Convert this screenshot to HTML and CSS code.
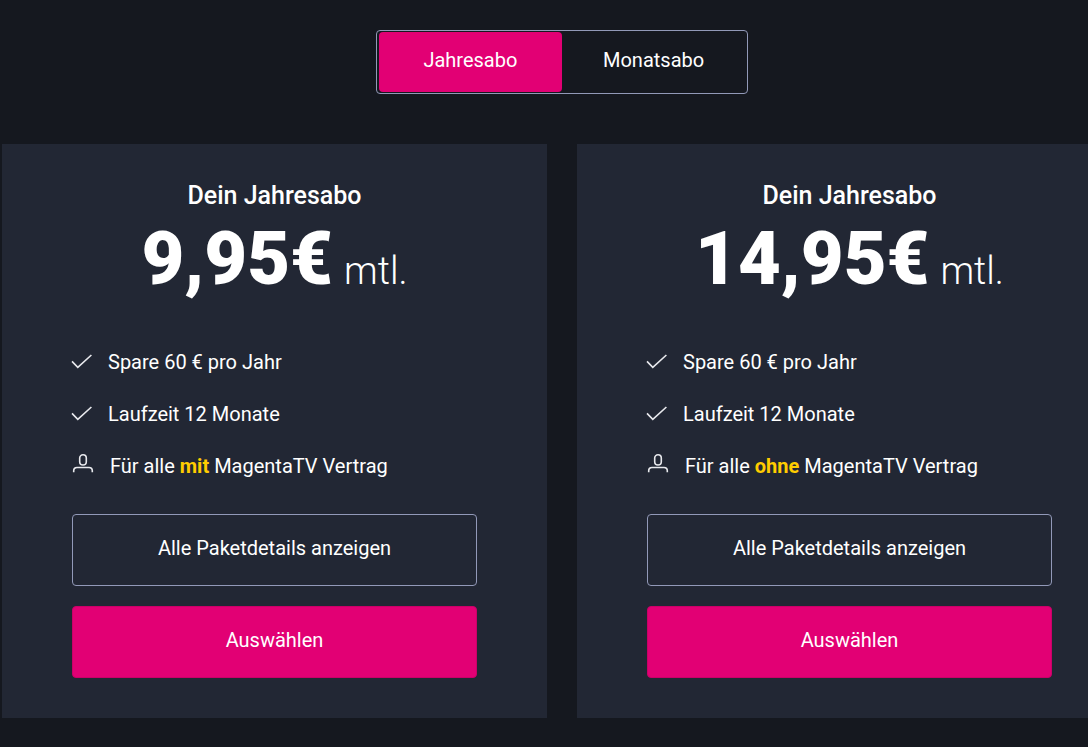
FILE: index.html
```html
<!DOCTYPE html>
<html lang="de">
<head>
<meta charset="utf-8">
<meta name="viewport" content="width=device-width, initial-scale=1">
<title>MagentaTV Abo</title>
<link rel="stylesheet" href="styles.css">
</head>
<body>
<svg class="sprite" aria-hidden="true">
  <symbol id="check" viewBox="0 0 24 24"><path d="M2 11.4 7.8 17.4 21.4 5"/></symbol>
  <symbol id="person" viewBox="0 0 24 24"><rect x="8.7" y="0.8" width="6.6" height="10.2" rx="3.3"/><path d="M2.7 18.2V16.8Q2.7 13.5 6 13.5H18Q21.3 13.5 21.3 16.8V18.2"/></symbol>
</svg>
<main class="page">
  <div class="plans">
    <div class="toggle" role="group" aria-label="Abo-Laufzeit">
      <button class="toggle-option is-active" type="button" aria-pressed="true">Jahresabo</button>
      <button class="toggle-option" type="button" aria-pressed="false">Monatsabo</button>
    </div>
    <div class="cards">
      <section class="card">
        <h2 class="card-title">Dein Jahresabo</h2>
        <p class="price"><strong class="amount">9,95€</strong> <span class="period">mtl.</span></p>
        <ul class="features">
          <li class="feature"><svg class="icon"><use href="#check"/></svg><span>Spare 60 € pro Jahr</span></li>
          <li class="feature"><svg class="icon"><use href="#check"/></svg><span>Laufzeit 12 Monate</span></li>
          <li class="feature feature-person"><svg class="icon"><use href="#person"/></svg><span>Für alle <b class="highlight">mit</b> MagentaTV Vertrag</span></li>
        </ul>
        <div class="actions">
          <button class="button" type="button">Alle Paketdetails anzeigen</button>
          <button class="button button-primary" type="button">Auswählen</button>
        </div>
      </section>
      <section class="card">
        <h2 class="card-title">Dein Jahresabo</h2>
        <p class="price"><strong class="amount">14,95€</strong> <span class="period">mtl.</span></p>
        <ul class="features">
          <li class="feature"><svg class="icon"><use href="#check"/></svg><span>Spare 60 € pro Jahr</span></li>
          <li class="feature"><svg class="icon"><use href="#check"/></svg><span>Laufzeit 12 Monate</span></li>
          <li class="feature feature-person"><svg class="icon"><use href="#person"/></svg><span>Für alle <b class="highlight">ohne</b> MagentaTV Vertrag</span></li>
        </ul>
        <div class="actions">
          <button class="button" type="button">Alle Paketdetails anzeigen</button>
          <button class="button button-primary" type="button">Auswählen</button>
        </div>
      </section>
    </div>
  </div>
</main>
</body>
</html>
```
FILE: styles.css
```css
* { box-sizing: border-box; }

body {
  margin: 0;
  background: #15181f;
  color: #fff;
  font: 20px/28px Roboto, "Liberation Sans", sans-serif;
}

.sprite { display: none; }

.page { overflow: hidden; }

/* The card row runs past the right edge of the window. */
.plans {
  display: flex;
  flex-direction: column;
  align-items: center;
  gap: 50px;
  margin: 0 -34px 0 2px;
  padding: 30px 0 28px;
}

.toggle {
  display: grid;
  grid-template-columns: 1fr 1fr;
  padding: 1px 2px;
  border: 1px solid #9299b8;
  border-radius: 4px;
}

.toggle-option {
  padding: 14px 41px 18px;
  border: 0;
  border-radius: 4px;
  background: transparent;
  color: inherit;
  font: inherit;
}

.toggle-option.is-active { background: #e20074; }

.cards {
  display: grid;
  grid-template-columns: 1fr 1fr;
  gap: 30px;
  width: 100%;
}

.card {
  padding: 36px 70px 40px;
  background: #222734;
}

.card-title {
  margin: 0;
  font-size: 25px;
  font-weight: 500;
  line-height: 32px;
  text-align: center;
}

.price {
  margin: 0;
  line-height: 94px;
  text-align: center;
}

.amount {
  font-size: 74px;
  font-weight: 900;
}

.period {
  margin-left: 6px;
  font-size: 38px;
  font-weight: 300;
}

.features {
  display: grid;
  gap: 24px;
  margin: 24px 0 34px;
  padding: 0;
  list-style: none;
}

.feature {
  display: flex;
  align-items: center;
  gap: 14px;
  margin-left: -2px;
}

.feature-person { gap: 15px; margin-left: -1px; }

.icon {
  width: 24px;
  height: 24px;
  fill: none;
  stroke: #e8e9ed;
  stroke-width: 1.6;
}

.highlight {
  color: #fc0;
  font-weight: 700;
}

.actions {
  display: grid;
  gap: 20px;
}

.button {
  padding: 19px 20px 23px;
  border: 1px solid #9299b8;
  border-radius: 4px;
  background: transparent;
  color: inherit;
  font: inherit;
}

.button-primary {
  border-color: #cb0068;
  background: #e20074;
}
```
